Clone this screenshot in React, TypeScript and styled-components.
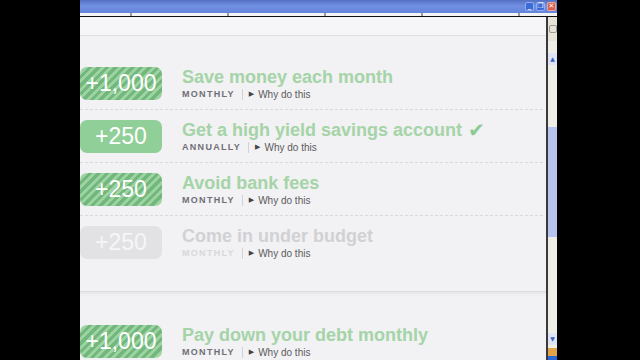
import styled, { createGlobalStyle } from 'styled-components';

const GlobalStyle = createGlobalStyle`
  html, body {
    margin: 0;
    padding: 0;
    background: #000;
  }
  body {
    font-family: "Liberation Sans", Arial, sans-serif;
  }
`;

type Goal = {
    points: string;
    title: string;
    period: string;
    kind: 'striped' | 'solid' | 'faded';
    done?: boolean;
};

const firstGoals: Goal[] = [
    { points: '+1,000', title: 'Save money each month', period: 'MONTHLY', kind: 'striped' },
    { points: '+250', title: 'Get a high yield savings account', period: 'ANNUALLY', kind: 'solid', done: true },
    { points: '+250', title: 'Avoid bank fees', period: 'MONTHLY', kind: 'striped' },
    { points: '+250', title: 'Come in under budget', period: 'MONTHLY', kind: 'faded' },
];

const secondGoals: Goal[] = [
    { points: '+1,000', title: 'Pay down your debt monthly', period: 'MONTHLY', kind: 'striped' },
];

const GoalRow = ({ goal }: { goal: Goal }) => (
    <Row>
        <Badge $kind={goal.kind}>{goal.points}</Badge>
        <Text>
            <Title $faded={goal.kind === 'faded'}>
                {goal.title}
                {goal.done && <Check>✔</Check>}
            </Title>
            <Meta>
                <Period $faded={goal.kind === 'faded'}>{goal.period}</Period>
                <Divider />
                <Arrow>▶</Arrow>
                <Why>Why do this</Why>
            </Meta>
        </Text>
    </Row>
);

const App = () => {
    return (
        <>
            <GlobalStyle />
            <Screen>
                <Window>
                    <TitleBar>
                        <WinButton>_</WinButton>
                        <WinButton>❐</WinButton>
                        <WinButton $close>✕</WinButton>
                    </TitleBar>
                    <MenuStrip />
                    <Body>
                        <Content>
                            <TopStrip />
                            <Card $first>
                                {firstGoals.map((g) => (
                                    <GoalRow key={g.title} goal={g} />
                                ))}
                            </Card>
                            <Card>
                                {secondGoals.map((g) => (
                                    <GoalRow key={g.title} goal={g} />
                                ))}
                            </Card>
                        </Content>
                        <Frame />
                        <Scrollbar>
                            <ScrollTop>
                                <ScrollIcon />
                            </ScrollTop>
                            <ScrollArrow>▲</ScrollArrow>
                            <Track $h={62} />
                            <Thumb />
                            <Track $h={84} />
                            <ScrollArrow>▼</ScrollArrow>
                            <TaskIcon />
                            <TaskBar />
                        </Scrollbar>
                    </Body>
                </Window>
            </Screen>
        </>
    );
};

const Screen = styled.div`
    width: 640px;
    height: 360px;
    background: #000;
    display: flex;
    overflow: hidden;
`;

const Window = styled.div`
    margin-left: 80px;
    width: 477px;
    height: 360px;
    display: flex;
    flex-direction: column;
    background: #efeef1;
`;

const TitleBar = styled.div`
    height: 13px;
    flex-shrink: 0;
    background: linear-gradient(#5470c4, #7190e2 45%, #6585da);
    display: flex;
    justify-content: flex-end;
    align-items: center;
    gap: 2px;
    padding-right: 1px;
`;

const WinButton = styled.div<{ $close?: boolean }>`
    width: 9px;
    height: 9px;
    border-radius: 2px;
    background: ${(p) => (p.$close ? '#d8604f' : '#3b6bd9')};
    box-shadow: inset 0 0 0 1px rgba(255, 255, 255, 0.45);
    color: #fff;
    font-size: 7px;
    line-height: 9px;
    text-align: center;
    font-family: "DejaVu Sans", sans-serif;
    font-weight: bold;
`;

const MenuStrip = styled.div`
    height: 3px;
    flex-shrink: 0;
    background: repeating-linear-gradient(90deg, #f4f4f4 0 50px, #9a9a9a 50px 52px, #f4f4f4 52px 97px);
    border-bottom: 1px solid #111;
`;

const Body = styled.div`
    flex: 1;
    display: flex;
    min-height: 0;
`;

const Content = styled.div`
    width: 466px;
    display: flex;
    flex-direction: column;
    background: #efeef1;
    overflow: hidden;
`;

const TopStrip = styled.div`
    height: 18px;
    flex-shrink: 0;
    background: #f6f5f7;
    border-bottom: 1px solid #dedde1;
`;

const Card = styled.div<{ $first?: boolean }>`
    flex-shrink: 0;
    background: #f2f1f3;
    margin-top: ${(p) => (p.$first ? '0' : '4px')};
    padding: ${(p) => (p.$first ? '21px 3px 23px 0' : '19px 3px 0 0')};
    border-bottom: ${(p) => (p.$first ? '1px solid #dcdbde' : 'none')};
    box-shadow: ${(p) => (p.$first ? '0 1px 2px rgba(0, 0, 0, 0.05)' : 'none')};
`;

const Row = styled.div`
    display: flex;
    align-items: center;
    padding: 10px 0 9px;
    border-bottom: 1px dashed #d9d9db;
    &:last-child {
        border-bottom: none;
    }
`;

const Badge = styled.div<{ $kind: 'striped' | 'solid' | 'faded' }>`
    width: 82px;
    height: 33px;
    flex-shrink: 0;
    border-radius: 7px;
    display: flex;
    align-items: center;
    justify-content: center;
    font-size: 23px;
    color: ${(p) => (p.$kind === 'faded' ? '#f6f6f6' : '#ffffff')};
    background: ${(p) =>
        p.$kind === 'striped'
            ? 'repeating-linear-gradient(135deg, #72b87c 0 3px, #9dd2a3 3px 6px)'
            : p.$kind === 'solid'
            ? '#90cf98'
            : '#e2e2e4'};
`;

const Text = styled.div`
    margin-left: 20px;
    height: 33px;
    display: flex;
    flex-direction: column;
`;

const Title = styled.div<{ $faded?: boolean }>`
    font-size: 18px;
    line-height: 20px;
    font-weight: bold;
    color: ${(p) => (p.$faded ? '#d1d1d4' : '#a4d4a7')};
    white-space: nowrap;
    display: flex;
    align-items: center;
`;

const Check = styled.span`
    margin-left: 6px;
    font-family: "DejaVu Sans", sans-serif;
    font-size: 20px;
    color: #8ccc93;
`;

const Meta = styled.div`
    display: flex;
    align-items: center;
    height: 12px;
    margin-top: 1px;
`;

const Period = styled.span<{ $faded?: boolean }>`
    font-size: 9px;
    font-weight: bold;
    letter-spacing: 1.3px;
    color: ${(p) => (p.$faded ? '#d8d8da' : '#6f6f78')};
`;

const Divider = styled.span`
    width: 1px;
    height: 11px;
    background: #d2d2d4;
    margin: 0 6px 0 7px;
`;

const Arrow = styled.span`
    font-family: "DejaVu Sans", sans-serif;
    font-size: 7px;
    color: #444;
    margin-right: 4px;
`;

const Why = styled.span`
    font-size: 10px;
    color: #5c5c5c;
`;

const Frame = styled.div`
    width: 2px;
    background: #3a3a3a;
`;

const Scrollbar = styled.div`
    width: 9px;
    display: flex;
    flex-direction: column;
    background: #eeede6;
`;

const ScrollTop = styled.div`
    height: 24px;
    background: #e6e4d6;
    display: flex;
    align-items: center;
    justify-content: center;
`;

const ScrollIcon = styled.div`
    width: 6px;
    height: 6px;
    border: 1px solid #9a9a9a;
    border-radius: 2px;
`;

const ScrollArrow = styled.div`
    height: 12px;
    margin-top: 12px;
    font-family: "DejaVu Sans", sans-serif;
    font-size: 6px;
    line-height: 12px;
    text-align: center;
    color: #3a5fc8;
    background: #dfe4f4;
`;

const Track = styled.div<{ $h: number }>`
    height: ${(p) => p.$h}px;
`;

const Thumb = styled.div`
    height: 110px;
    background: #b7c3ef;
`;

const TaskIcon = styled.div`
    height: 8px;
    margin-top: 3px;
    background: #e2a24a;
`;

const TaskBar = styled.div`
    flex: 1;
    background: #2b68d6;
`;

export default App;
